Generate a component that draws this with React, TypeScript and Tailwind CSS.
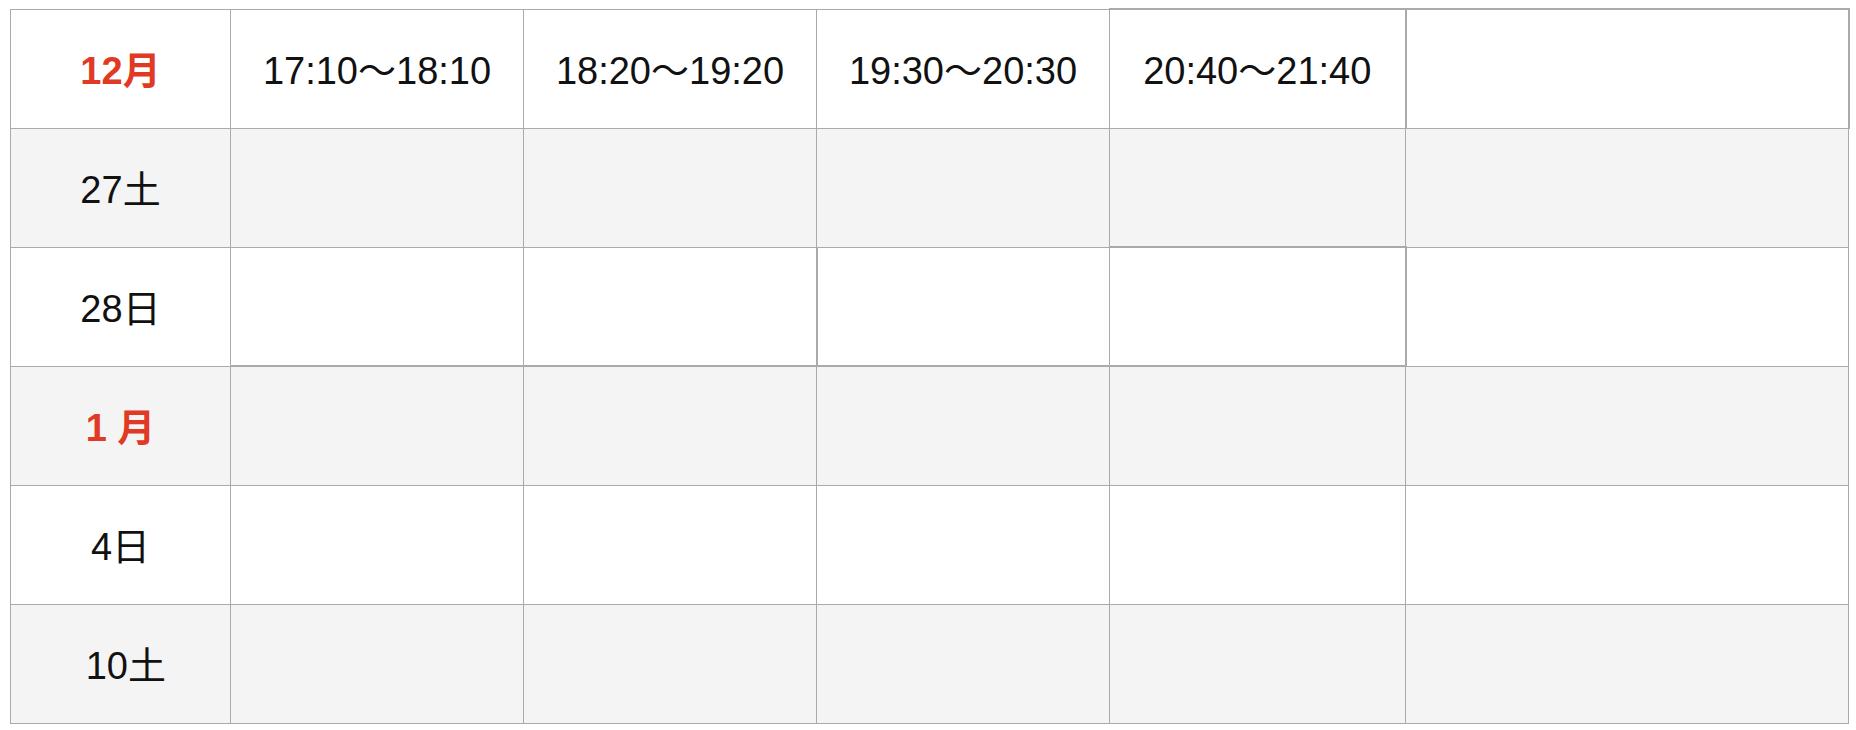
import React from 'react';

const times = ['17:10〜18:10', '18:20〜19:20', '19:30〜20:30', '20:40〜21:40', ''];

interface Row {
    label: string;
    month?: boolean;
    shaded?: boolean;
}

const rows: Row[] = [
    { label: '27土', shaded: true },
    { label: '28日' },
    { label: '1 月', month: true, shaded: true },
    { label: '4日' },
    { label: '\u00a010土', shaded: true },
];

// a few cells in the original render with heavier edges
const headEdge = ['', '', '', 'border-t-2', 'border-t-2 border-l-2 border-r-2'];
const row28Edge = ['border-b-2', 'border-b-2', 'border-b-2 border-l-2', 'border-b-2 border-t-2 border-r-2', ''];

const cell = 'border border-[#aaaaaa] text-center align-middle p-0 pt-[5px]';

const App: React.FC = () => {
    return (
        <div className="min-h-screen bg-white pt-[8px] pl-[10px] font-['Liberation_Sans','Noto_Sans_CJK_JP',sans-serif] text-[38px] text-[#111]">
            <table className="w-[1838px] table-fixed border-collapse">
                <colgroup>
                    <col className="w-[220px]" />
                    <col className="w-[293px]" />
                    <col className="w-[293px]" />
                    <col className="w-[293px]" />
                    <col className="w-[296px]" />
                    <col className="w-[443px]" />
                </colgroup>
                <thead>
                    <tr className="h-[119px] bg-white">
                        <th className={`${cell} font-bold text-[#e03a24]`}>12月</th>
                        {times.map((t, i) => (
                            <th key={i} className={`${cell} font-normal ${headEdge[i]}`}>
                                {t}
                            </th>
                        ))}
                    </tr>
                </thead>
                <tbody>
                    {rows.map((r, ri) => (
                        <tr key={ri} className={`h-[119px] ${r.shaded ? 'bg-[#f4f4f4]' : 'bg-white'}`}>
                            <td className={`${cell} ${r.month ? 'font-bold text-[#e03a24]' : ''}`}>{r.label}</td>
                            {times.map((_, ci) => (
                                <td key={ci} className={`${cell} ${ri === 1 ? row28Edge[ci] : ''}`}></td>
                            ))}
                        </tr>
                    ))}
                </tbody>
            </table>
        </div>
    );
};

export default App;
